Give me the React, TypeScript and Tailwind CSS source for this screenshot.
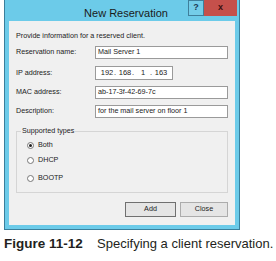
export default function App() {
  const font = { fontFamily: '"Liberation Sans", Arial, sans-serif' }
  return (
    <div className="w-[276px] h-[261px] bg-white relative overflow-hidden" style={font}>
      {/* Window */}
      <div className="ml-[4px] w-[236px] h-[230px] bg-[#6ccbe9] border-x border-b border-[#3a7f9c] flex flex-col">
        {/* Title bar */}
        <div className="h-[21px] flex items-start relative">
          <div className="flex-1 text-center text-[11px] text-[#1a1a1a] pt-[5px] pl-[8px]">New Reservation</div>
          <div className="absolute right-[2px] top-0 flex">
            <div className="w-[16px] h-[16px] flex items-center justify-center text-[9px] font-bold text-[#1c3b57] border border-[#3f7f9b] bg-[#74cde9]">?</div>
            <div className="w-[33px] h-[16px] flex items-center justify-center text-[9px] font-bold text-[#3a1010] bg-[#c5504b]">x</div>
          </div>
        </div>
        {/* Client area */}
        <div className="mx-[4px] mb-[4px] flex-1 bg-[#f0f0f0] text-[7.2px] text-[#222] relative">
          <div className="absolute left-[7px] top-[10px]">Provide information for a reserved client.</div>
          {[
            { label: "Reservation name:", value: "Mail Server 1", top: 25 },
            { label: "MAC address:", value: "ab-17-3f-42-69-7c", top: 65 },
            { label: "Description:", value: "for the mail server on floor 1", top: 84 },
          ].map((r) => (
            <div key={r.label} className="absolute left-[7px] right-[7px] flex items-center" style={{ top: r.top }}>
              <div className="w-[79px]">{r.label}</div>
              <div className="flex-1 h-[13px] bg-white border border-[#9a9a9a] pl-[2px] flex items-center">{r.value}</div>
            </div>
          ))}
          <div className="absolute left-[7px] flex items-center" style={{ top: 45 }}>
            <div className="w-[79px]">IP address:</div>
            <div className="w-[78px] h-[14px] bg-white border border-[#9a9a9a] flex items-center pl-[4px] text-[7.5px]">
              <span className="w-[14px] text-center">192</span>
              <span className="w-[4px]">.</span>
              <span className="w-[14px] text-center">168</span>
              <span className="w-[4px]">.</span>
              <span className="w-[14px] text-center">1</span>
              <span className="w-[4px]">.</span>
              <span className="w-[14px] text-center">163</span>
            </div>
          </div>
          {/* Group box */}
          <div className="absolute left-[7px] right-[7px] top-[110px] h-[62px] border border-[#d5d5d5]">
            <div className="absolute -top-[6px] left-[4px] bg-[#f0f0f0] px-[1px]">Supported types</div>
            {[
              { t: "Both", on: true, y: 8 },
              { t: "DHCP", on: false, y: 23 },
              { t: "BOOTP", on: false, y: 41 },
            ].map((o) => (
              <div key={o.t} className="absolute left-[10px] flex items-center gap-[4px]" style={{ top: o.y }}>
                <div className="w-[7px] h-[7px] rounded-full border border-[#777] bg-white flex items-center justify-center">
                  {o.on && <div className="w-[3px] h-[3px] rounded-full bg-[#222]" />}
                </div>
                <span>{o.t}</span>
              </div>
            ))}
          </div>
          {/* Buttons */}
          <div className="absolute right-[7px] top-[181px] flex gap-[4px]">
            <div className="w-[51px] h-[15px] border border-[#707070] bg-[#e5e5e5] flex items-center justify-center">Add</div>
            <div className="w-[48px] h-[15px] border border-[#acacac] bg-[#e5e5e5] flex items-center justify-center">Close</div>
          </div>
        </div>
      </div>
      {/* Caption */}
      <div className="mt-[4px] ml-[4px] flex items-baseline text-[13px] text-[#231f20]">
        <span className="font-bold text-[13.5px] w-[93px]">Figure 11-12</span>
        <span>Specifying a client reservation.</span>
      </div>
    </div>
  )
}
